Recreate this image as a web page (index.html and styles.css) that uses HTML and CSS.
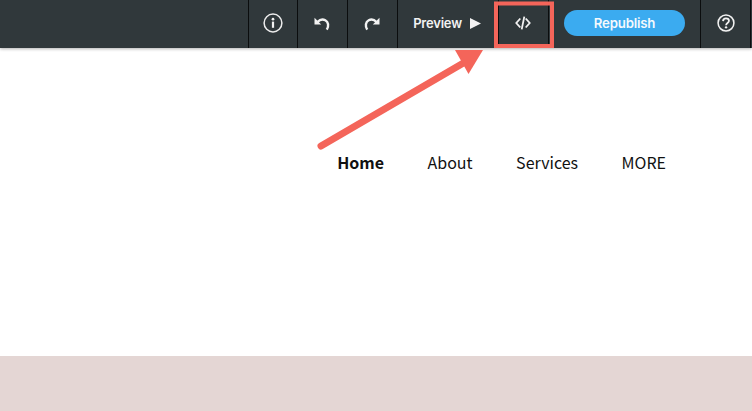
FILE: index.html
```html
<!DOCTYPE html>
<html lang="en">
<head>
<meta charset="utf-8">
<title>Editor</title>
<link rel="stylesheet" href="styles.css">
</head>
<body>
<div class="page">
  <header class="toolbar">
    <div class="tool tool-info">
      <svg class="icon" viewBox="0 0 20 20"><circle cx="10" cy="10" r="8.9" fill="none" stroke="#ececec" stroke-width="1.5"/><circle cx="10" cy="6.2" r="1.35" fill="#f2f2f2"/><rect x="8.9" y="8.6" width="2.2" height="6.2" fill="#f2f2f2"/></svg>
    </div>
    <div class="tool tool-icon">
      <svg class="icon-arrow icon-undo" viewBox="0 0 16 15"><path d="M3.500 6C6 3.400 9 3.100 11.300 4.300 14.500 6 15 10 12.800 13.700" fill="none" stroke="#f2f2f2" stroke-width="2.400"/><path d="M.5 1.800v6.700h6.700z" fill="#f2f2f2"/></svg>
    </div>
    <div class="tool tool-icon">
      <svg class="icon-arrow icon-redo" viewBox="0 0 16 15"><path d="M12.500 6C10 3.400 7 3.100 4.700 4.300 1.500 6 1 10 3.200 13.700" fill="none" stroke="#f2f2f2" stroke-width="2.400"/><path d="M15.500 1.800v6.700h-6.700z" fill="#f2f2f2"/></svg>
    </div>
    <div class="tool tool-preview">
      <span class="preview-label">Preview</span>
      <svg class="play" viewBox="0 0 11 11"><path d="M0 0l11 5.500L0 11z" fill="#f2f2f2"/></svg>
    </div>
    <div class="tool tool-code">
      <svg class="code-icon" viewBox="0 0 16 14"><path d="M5.300 2.500L1.300 7l4 4.500M10.700 2.500l4 4.500-4 4.500M9.300 .6L6.700 13.400" fill="none" stroke="#f2f2f2" stroke-width="1.800"/></svg>
    </div>
    <div class="publish-wrap"><span class="publish">Republish</span></div>
    <div class="tool tool-icon">
      <svg class="icon-help" viewBox="0 0 20 20"><circle cx="10" cy="10" r="8.800" fill="none" stroke="#f2f2f2" stroke-width="1.700"/><path d="M6.700 7.900C6.800 5.800 8.200 4.800 10 4.800c1.900 0 3.300 1.100 3.300 2.800 0 2.500-3.200 2.300-3.200 4.800" fill="none" stroke="#f2f2f2" stroke-width="2"/><circle cx="10.100" cy="14.800" r="1.300" fill="#f2f2f2"/></svg>
    </div>
    <div class="tool-edge"></div>
  </header>
  <main class="canvas">
    <nav class="nav">
      <a class="nav-link nav-active">Home</a>
      <a class="nav-link">About</a>
      <a class="nav-link">Services</a>
      <a class="nav-link">MORE</a>
    </nav>
  </main>
  <div class="band"></div>
  <svg class="annotation" viewBox="0 0 752 411" aria-hidden="true">
    <rect x="496" y="3.500" width="56" height="42.500" fill="none" stroke="#f4655a" stroke-width="4"/>
    <path d="M321 146L472 58" fill="none" stroke="#f4655a" stroke-width="7" stroke-linecap="round"/>
    <path d="M455 50H483L468.500 74z" fill="#f4655a"/>
  </svg>
</div>
</body>
</html>
```

FILE: styles.css
```css
* { box-sizing: border-box; }
html, body { margin: 0; padding: 0; background: #fff; }
.page { position: relative; width: 752px; height: 411px; overflow: hidden; display: flex; flex-direction: column; }

.toolbar {
  height: 48px;
  flex: none;
  display: flex;
  justify-content: flex-end;
  align-items: stretch;
  background: #30383b;
  box-shadow: 0 1px 3px rgba(0,0,0,.3);
  position: relative;
  font-family: Inter, "Liberation Sans", sans-serif;
  color: #f2f2f2;
}
.tool { display: flex; align-items: center; justify-content: center; border-left: 1px solid #0b0d0e; padding-bottom: 2px; }
.tool-info { width: 49px; }
.tool-icon { width: 50px; }
.icon-undo { margin-right: 2px; }
.icon-redo { margin-right: 2px; }
.tool-preview { width: 101px; gap: 8px; padding-right: 3px; padding-left: 1px; }
.preview-label { font-size: 13px; font-weight: 600; letter-spacing: -.2px; }
.play { width: 11px; height: 11px; }
.tool-code { width: 51px; border-right: 1px solid #0b0d0e; padding-right: 1px; }
.publish-wrap { width: 151px; display: flex; align-items: center; justify-content: center; padding-bottom: 2px; }
.publish {
  width: 121px; height: 26px; border-radius: 13px;
  background: #3babf0; color: #f4f9fd;
  font-size: 13.250px; font-weight: 600; letter-spacing: -.2px;
  display: flex; align-items: center; justify-content: center;
}
.tool-edge { width: 2px; border-left: 1px solid #0b0d0e; }
.icon { width: 20px; height: 20px; }
.icon-arrow { width: 16px; height: 15px; }
.icon-help { width: 18px; height: 18px; }
.code-icon { width: 16px; height: 14px; }

.canvas { flex: 1; background: #fff; display: flex; align-items: flex-start; justify-content: flex-end; padding: 101px 86px 0 0; }
.nav { display: flex; gap: 43.500px; font-family: "Noto Sans CJK SC", "Noto Sans", sans-serif; font-size: 16px; line-height: 26px; color: #111; }
.nav-link { display: block; }
.nav-active { font-weight: 700; }

.band { height: 55px; flex: none; background: #e4d6d4; }

.annotation { position: absolute; left: 0; top: 0; width: 752px; height: 411px; pointer-events: none; }
```
